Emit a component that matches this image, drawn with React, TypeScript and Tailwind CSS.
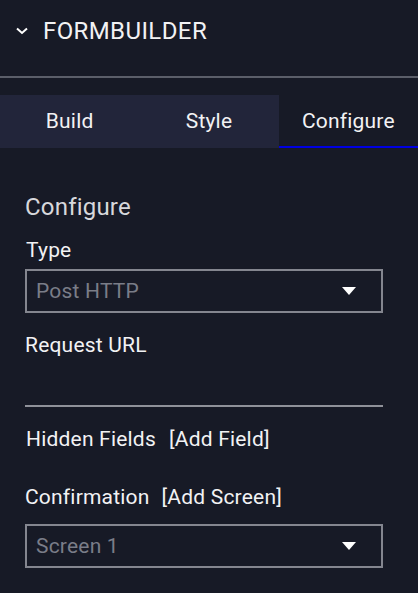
import React, { useState } from 'react';

const tabs = ['Build', 'Style', 'Configure'] as const;

function Caret() {
    return (
        <svg width="14" height="8" viewBox="0 0 14 8" className="shrink-0">
            <path d="M0 0 L14 0 L7 8 Z" fill="#ffffff" />
        </svg>
    );
}

function SelectBox({ value }: { value: string }) {
    return (
        <div className="flex h-[44px] w-[358px] items-center justify-between border-2 border-[#84868f] pl-[9px] pr-[25px]">
            <span className="text-[21px] leading-[25px] tracking-[0.2px] text-[#7a7d88]">{value}</span>
            <Caret />
        </div>
    );
}

export default function App() {
    const [activeTab, setActiveTab] = useState<(typeof tabs)[number]>('Configure');

    return (
        <div className="min-h-screen bg-[#171a26] font-['Roboto',sans-serif] text-[#f2f2f4] antialiased">
            <div className="flex h-[76px] items-start gap-[15px] pl-[16px] pt-[17px]">
                <svg width="12" height="8" viewBox="0 0 12 8" className="mt-[10px]">
                    <path d="M1 1.5 L6 6 L11 1.5" fill="none" stroke="#ffffff" strokeWidth="2" />
                </svg>
                <span className="text-[24px] leading-[28px] tracking-[0.4px]">FORMBUILDER</span>
            </div>
            <div className="h-[2px] bg-[#5b5e69]" />

            <div className="mt-[17px] grid h-[53px] grid-cols-3 bg-[#22253a]">
                {tabs.map(tab => (
                    <button
                        key={tab}
                        onClick={() => setActiveTab(tab)}
                        className={
                            tab === activeTab
                                ? 'flex items-center justify-center border-b-2 border-[#0000e0] bg-[#171a26] pt-[2px] text-[21px] tracking-[0.2px] text-[#f2f2f4]'
                                : 'flex items-center justify-center text-[21px] tracking-[0.2px] text-[#f2f2f4]'
                        }
                    >
                        {tab}
                    </button>
                ))}
            </div>

            <div className="flex flex-col px-[25px] pt-[45px] tracking-[0.2px]">
                <h2 className="text-[24px] leading-[28px] text-[#d7d8dc]">Configure</h2>
                <label className="mt-[17px] pl-[1px] text-[21px] leading-[25px]">Type</label>
                <div className="mt-[6px]">
                    <SelectBox value="Post HTTP" />
                </div>
                <label className="mt-[20px] text-[21px] leading-[25px]">Request URL</label>
                <div className="h-[49px] w-[358px] border-b-2 border-[#8f9199]" />
                <div className="mt-[20px] flex gap-[13px] pl-[1px] text-[21px] leading-[25px]">
                    <span>Hidden Fields</span>
                    <span>[Add Field]</span>
                </div>
                <div className="mt-[33px] flex gap-[12px] text-[21px] leading-[25px]">
                    <span>Confirmation</span>
                    <span>[Add Screen]</span>
                </div>
                <div className="mt-[14px]">
                    <SelectBox value="Screen 1" />
                </div>
            </div>
        </div>
    );
}
